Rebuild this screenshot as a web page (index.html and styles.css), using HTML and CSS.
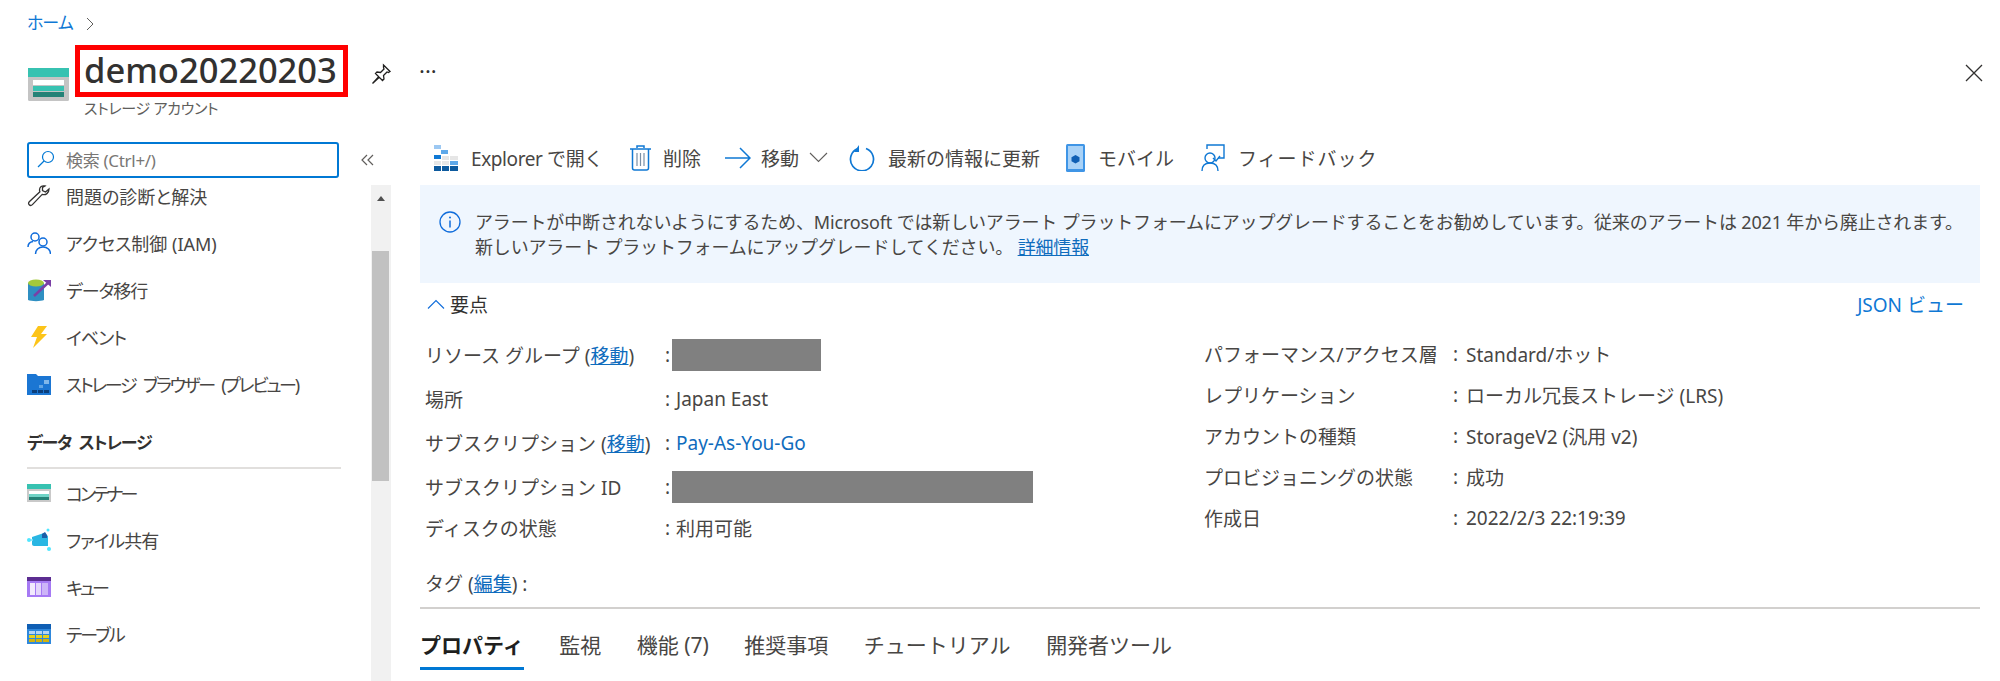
FILE: index.html
```html
<!DOCTYPE html>
<html lang="ja">
<head>
    <meta charset="UTF-8">
    <title>demo20220203 - ストレージ アカウント</title>
    <link rel="stylesheet" href="styles.css">
</head>
<body>

    <nav class="breadcrumb">
        <a href="#">ホーム</a>
        <svg width="10" height="14" viewBox="0 0 10 14"><path d="M2 1l6 6-6 6" fill="none" stroke="#605e5c" stroke-width="1"/></svg>
    </nav>

    <header class="blade-header">
        <svg class="blade-icon" width="41" height="33" viewBox="0 0 41 33">
            <rect x="0" y="0" width="41" height="33" rx="1.5" fill="#c4c4c4"/>
            <rect x="0" y="0" width="41" height="9" fill="#37c2b1"/>
            <rect x="5" y="12" width="31" height="5" fill="#fff"/>
            <rect x="5" y="18" width="31" height="5" fill="#37c2b1"/>
            <rect x="5" y="24" width="31" height="5" fill="#258277"/>
        </svg>
        <div class="blade-title">
            <h1>demo20220203</h1>
            <p>ストレージ アカウント</p>
        </div>
        <svg class="pin" width="22" height="22" viewBox="0 0 22 22"><path d="M13.5 2l6.500 6.500-1.500 1-1.500-.5-3.500 3.500.5 3.500-1.500 1.500-3.200-3.200-6.800 6.200 6.200-6.800-3.200-3.200 1.500-1.500 3.500.5 3.500-3.500-.5-1.500z" fill="none" stroke="#201f1e" stroke-width="1.300"/></svg>
        <span class="more">···</span>
        <svg class="close" width="18" height="18" viewBox="0 0 18 18"><path d="M1 1l16 16M17 1L1 17" stroke="#323130" stroke-width="1.300"/></svg>
    </header>

    <div class="blade-body">
        <aside class="sidebar">
            <div class="sidebar-main">
                <div class="search">
                    <svg width="18" height="18" viewBox="0 0 18 18"><circle cx="11" cy="7" r="5.500" fill="none" stroke="#0078d4" stroke-width="1.200"/><path d="M7 11l-6 6" stroke="#0078d4" stroke-width="1.300"/></svg>
                    <span>検索 (Ctrl+/)</span>
                </div>
                <ul class="menu menu-first">
                    <li>
                        <svg width="24" height="24" viewBox="0 0 24 24"><path d="M22 5l-3.500 3-3-1.500V3.500L18 2c-3-.8-5.500 1-5.500 4 0 .8.200 1.300.400 1.800L2.500 17.500c-1.200 1.200-1.200 2.500-.3 3.300.9.900 2.200.8 3.200-.2l9.800-10.200c3.500 1 6.800-1.300 6.800-5.400z" fill="none" stroke="#323130" stroke-width="1.300"/></svg>
                        問題の診断と解決
                    </li>
                    <li>
                        <svg width="24" height="24" viewBox="0 0 24 24"><g fill="none" stroke="#0f6cdb" stroke-width="1.500"><circle cx="8" cy="6" r="4"/><path d="M1 16c0-3 2-5 5-5.500"/><circle cx="16" cy="11" r="4"/><path d="M8.500 23c0-4 3-7 7.500-7s7.500 3 7.500 7"/></g></svg>
                        アクセス制御 (IAM)
                    </li>
                    <li class="tight-1">
                        <svg width="24" height="24" viewBox="0 0 24 24"><path d="M1 5h16v17c-3 1.500-13 1.500-16 0z" fill="#2f8fc2"/><ellipse cx="9" cy="5" rx="8" ry="3.500" fill="#a4c93a"/><path d="M7 18L22 4" stroke="#7a3fa6" stroke-width="2.500"/><path d="M16 2h8v7z" fill="#7a3fa6"/></svg>
                        データ移行
                    </li>
                    <li class="tight-1">
                        <svg width="24" height="24" viewBox="0 0 24 24"><path d="M11 1h9l-6 8h6L6 23l4-11H4z" fill="#fcc419"/></svg>
                        イベント
                    </li>
                    <li class="tight-words">
                        <svg width="24" height="22" viewBox="0 0 24 22"><path d="M0 1h9l2 2h13v19H0z" fill="#1b76d3"/><rect x="17" y="7" width="5" height="4" fill="#7fb7ea"/><rect x="12" y="12" width="4" height="3" fill="#5fa4e4"/><rect x="5" y="17" width="5" height="3" fill="#0b3f7c"/><rect x="11" y="17" width="5" height="3" fill="#0b3f7c"/><rect x="17" y="17" width="5" height="3" fill="#0b3f7c"/></svg>
                        ストレージ ブラウザー (プレビュー)
                    </li>
                </ul>
                <h2 class="menu-section">データ ストレージ</h2>
                <ul class="menu">
                    <li class="tight-3">
                        <svg width="24" height="18" viewBox="0 0 24 18"><rect width="24" height="18" fill="#c9c9c9"/><rect width="24" height="5" fill="#37c2b1"/><rect x="2" y="7" width="20" height="3" fill="#fff"/><rect x="2" y="10" width="20" height="3" fill="#6fd3c6"/><rect x="2" y="13" width="20" height="3" fill="#258277"/></svg>
                        コンテナー
                    </li>
                    <li class="tight-1">
                        <svg width="24" height="24" viewBox="0 0 24 24"><path d="M5 9l12-4 4 3v10H7c-1 0-2-1-2-2z" fill="#29b6e3"/><path d="M15 6l3-2 2 3v3h-5z" fill="#1a5fa8"/><path d="M1 12l5-1v2z" fill="#6fdcf5"/><circle cx="2" cy="12" r="2" fill="#50e6ff"/><circle cx="22" cy="21" r="2" fill="#50e6ff"/><circle cx="21" cy="2" r="1.500" fill="#50e6ff"/></svg>
                        ファイル共有
                    </li>
                    <li class="tight-3">
                        <svg width="24" height="20" viewBox="0 0 24 20"><rect width="24" height="20" fill="#a67af4"/><rect width="24" height="4" fill="#5c2d91"/><rect x="3" y="6" width="5" height="12" fill="#f2eafd"/><rect x="9" y="6" width="5" height="12" fill="#e4d6fb"/><rect x="15" y="6" width="6" height="12" fill="#cdb5f8"/></svg>
                        キュー
                    </li>
                    <li class="tight-2">
                        <svg width="24" height="20" viewBox="0 0 24 20"><rect width="24" height="20" fill="#2f88dc"/><rect y="0" width="24" height="5" fill="#0f5fb4"/><rect x="2" y="7" width="6" height="3" fill="#b3d4f5"/><rect x="9" y="7" width="6" height="3" fill="#b3d4f5"/><rect x="16" y="7" width="6" height="3" fill="#b3d4f5"/><rect x="2" y="11" width="6" height="3" fill="#e8d21d"/><rect x="9" y="11" width="6" height="3" fill="#e8d21d"/><rect x="16" y="11" width="6" height="3" fill="#e8d21d"/><rect x="2" y="15" width="6" height="3" fill="#d1b40f"/><rect x="9" y="15" width="6" height="3" fill="#d1b40f"/><rect x="16" y="15" width="6" height="3" fill="#d1b40f"/></svg>
                        テーブル
                    </li>
                </ul>
            </div>
            <div class="sidebar-side">
                <svg class="collapse" width="14" height="12" viewBox="0 0 14 12"><path d="M6 1L1 6l5 5M12 1L7 6l5 5" fill="none" stroke="#605e5c" stroke-width="1.200"/></svg>
                <div class="scrollbar">
                    <div class="scroll-arrow"></div>
                    <div class="scroll-thumb"></div>
                </div>
            </div>
        </aside>

        <main class="content">
            <div class="commandbar">
                <div class="command command-latin">
                    <svg width="24" height="26" viewBox="0 0 24 26"><rect x="0" y="0" width="7" height="4" fill="#9cc8f2"/><rect x="7" y="5" width="7" height="4" fill="#5ea9ea"/><rect x="0" y="10" width="7" height="4" fill="#0f78d4"/><rect x="8" y="11" width="7" height="4" fill="#e6e6e6"/><rect x="16" y="11" width="8" height="4" fill="#e6e6e6"/><rect x="0" y="16" width="7" height="4" fill="#e6e6e6"/><rect x="8" y="16" width="7" height="4" fill="#e6e6e6"/><rect x="16" y="16" width="8" height="4" fill="#5ea9ea"/><rect x="0" y="21" width="7" height="5" fill="#0d5a9e"/><rect x="8" y="21" width="7" height="5" fill="#0d5a9e"/><rect x="16" y="21" width="8" height="5" fill="#0d5a9e"/></svg>
                    Explorer で開く
                </div>
                <div class="command command-delete">
                    <svg width="21" height="26" viewBox="0 0 21 26"><g fill="none" stroke="#0f78d4" stroke-width="1.500"><path d="M7 3V1h7v2M0 4h21M2.500 4v19q0 2 2 2h12q2 0 2-2V4"/></g><path d="M7 8v13M10.500 8v13M14 8v13" stroke="#7a8fa6" stroke-width="1.200"/></svg>
                    削除
                </div>
                <div class="command command-move">
                    <svg width="26" height="24" viewBox="0 0 26 24"><path d="M0 12h25M15 2l10 10-10 10" fill="none" stroke="#0f78d4" stroke-width="1.500"/></svg>
                    移動
                    <svg width="19" height="11" viewBox="0 0 19 11"><path d="M1 1l8.500 8.500L18 1" fill="none" stroke="#605e5c" stroke-width="1.100"/></svg>
                </div>
                <div class="command">
                    <svg width="26" height="26" viewBox="0 0 26 26"><path d="M9 3.500a11.500 11.500 0 1 0 8 0" fill="none" stroke="#0f78d4" stroke-width="1.700"/><path d="M10 0v7H5z" fill="#0f78d4"/></svg>
                    最新の情報に更新
                </div>
                <div class="command">
                    <svg width="19" height="28" viewBox="0 0 19 28"><rect x="0" y="0" width="19" height="28" rx="1.500" fill="#3f95e6"/><rect x="2" y="2" width="15" height="23" fill="#a9d2f7"/><path d="M9.500 11l4 2.200v4.100l-4 2.200-4-2.200v-4.100z" fill="#0f5fb4"/></svg>
                    モバイル
                </div>
                <div class="command command-feedback">
                    <svg width="24" height="28" viewBox="0 0 24 28"><g fill="none" stroke="#0f78d4" stroke-width="1.400"><path d="M6 5V1h17v13h-6"/><path d="M12 14l3 3 4-5"/><circle cx="9" cy="14" r="5"/><path d="M1 27c0-5 3-8 8-8s8 3 8 8"/></g></svg>
                    フィードバック
                </div>
            </div>

            <div class="banner">
                <svg width="22" height="22" viewBox="0 0 22 22"><circle cx="11" cy="11" r="10" fill="none" stroke="#0f6cdb" stroke-width="1.300"/><circle cx="11" cy="6.500" r="1" fill="#0f6cdb"/><path d="M11 9.500v7" stroke="#0f6cdb" stroke-width="1.500"/></svg>
                <p>アラートが中断されないようにするため、Microsoft では新しいアラート プラットフォームにアップグレードすることをお勧めしています。従来のアラートは 2021 年から廃止されます。<br>新しいアラート プラットフォームにアップグレードしてください。 <a href="#" class="link">詳細情報</a></p>
            </div>

            <div class="essentials-head">
                <div class="essentials-toggle">
                    <svg width="18" height="10" viewBox="0 0 18 10"><path d="M1 9.500L9 1.500l8 8" fill="none" stroke="#0f6cdb" stroke-width="1.100"/></svg>
                    要点
                </div>
                <a href="#" class="json-link">JSON ビュー</a>
            </div>

            <div class="essentials">
                <div class="props props-left">
                    <div class="prop"><span class="prop-label">リソース グループ (<a href="#" class="link">移動</a>)</span><span class="prop-colon">:</span><span class="redacted redacted-short"></span></div>
                    <div class="prop"><span class="prop-label">場所</span><span class="prop-colon">:</span><span>Japan East</span></div>
                    <div class="prop"><span class="prop-label">サブスクリプション (<a href="#" class="link">移動</a>)</span><span class="prop-colon">:</span><a href="#" class="plain-link">Pay-As-You-Go</a></div>
                    <div class="prop"><span class="prop-label">サブスクリプション ID</span><span class="prop-colon">:</span><span class="redacted redacted-long"></span></div>
                    <div class="prop prop-last"><span class="prop-label">ディスクの状態</span><span class="prop-colon">:</span><span>利用可能</span></div>
                </div>
                <div class="props props-right">
                    <div class="prop"><span class="prop-label">パフォーマンス/アクセス層</span><span class="prop-colon">:</span><span>Standard/ホット</span></div>
                    <div class="prop"><span class="prop-label">レプリケーション</span><span class="prop-colon">:</span><span>ローカル冗長ストレージ (LRS)</span></div>
                    <div class="prop"><span class="prop-label">アカウントの種類</span><span class="prop-colon">:</span><span>StorageV2 (汎用 v2)</span></div>
                    <div class="prop"><span class="prop-label">プロビジョニングの状態</span><span class="prop-colon">:</span><span>成功</span></div>
                    <div class="prop"><span class="prop-label">作成日</span><span class="prop-colon">:</span><span>2022/2/3 22:19:39</span></div>
                </div>
            </div>

            <div class="tags">タグ (<a href="#" class="link">編集</a>) :</div>

            <div class="tabs">
                <div class="tab active">プロパティ</div>
                <div class="tab">監視</div>
                <div class="tab">機能 (7)</div>
                <div class="tab">推奨事項</div>
                <div class="tab">チュートリアル</div>
                <div class="tab">開発者ツール</div>
            </div>
        </main>
    </div>

</body>
</html>
```

FILE: styles.css
```css
* {
    box-sizing: border-box;
}
html, body {
    margin: 0;
    height: 681px;
    overflow: hidden;
}
body {
    font-family: "Noto Sans", "Noto Sans CJK JP", sans-serif;
    font-feature-settings: "palt";
    font-size: 16px;
    color: #323130;
    background: #fff;
}
a {
    text-decoration: none;
    color: #0f6cbd;
}
ul {
    list-style: none;
    margin: 0;
    padding: 0;
}

.breadcrumb {
    height: 45px;
    padding: 12px 0 0 27px;
    display: flex;
    align-items: flex-start;
    gap: 12px;
    font-size: 17px;
    letter-spacing: -1px;
    line-height: 22px;
}
.breadcrumb a {
    color: #0f78d4;
}
.breadcrumb svg {
    margin-top: 5px;
}

.blade-header {
    height: 90px;
    padding-left: 28px;
    display: flex;
    align-items: flex-start;
}
.blade-icon {
    margin-top: 23px;
}
.blade-title {
    margin-left: 6px;
}
.blade-title h1 {
    margin: 0;
    width: 273px;
    height: 52px;
    border: 5px solid #f00;
    padding-left: 4px;
    font-size: 34.500px;
    font-weight: 500;
    line-height: 40px;
    white-space: nowrap;
}
.blade-title p {
    margin: 0 0 0 9px;
    font-size: 15px;
    line-height: 22px;
    letter-spacing: -0.300px;
    color: #605e5c;
}
.pin {
    margin: 18px 0 0 22px;
}
.more {
    margin: 14px 0 0 27px;
    font-size: 22px;
    line-height: 22px;
}
.close {
    margin: 19px 17px 0 auto;
}

.blade-body {
    display: flex;
    height: 546px;
}

.sidebar {
    width: 420px;
    flex: none;
    display: flex;
}
.sidebar-main {
    width: 371px;
    flex: none;
    padding: 7px 0 0 27px;
    overflow: hidden;
}
.search {
    width: 312px;
    height: 36px;
    border: 2px solid #0078d4;
    border-radius: 3px;
    padding: 0 0 2px 8px;
    display: flex;
    align-items: center;
    gap: 11px;
    font-size: 17px;
    letter-spacing: -0.300px;
    color: #797775;
}
.menu-first {
    margin-top: -6px;
}
.menu li {
    height: 47px;
    display: flex;
    align-items: center;
    gap: 15px;
    font-size: 18px;
    color: #484644;
}
.menu li svg {
    flex: none;
}
.menu .tight-1 {
    letter-spacing: -1px;
}
.menu .tight-2 {
    letter-spacing: -2px;
}
.menu .tight-3 {
    letter-spacing: -3px;
}
.menu .tight-words {
    letter-spacing: -2.300px;
    word-spacing: 5px;
}
.menu-section {
    margin: 22px 0 0;
    width: 314px;
    height: 40px;
    border-bottom: 2px solid #e1dfdd;
    font-size: 17px;
    font-weight: 700;
    line-height: 22px;
    letter-spacing: -1.200px;
    word-spacing: 4px;
    padding-top: 3px;
}
.sidebar-side {
    width: 49px;
    display: flex;
    flex-direction: column;
}
.collapse {
    margin: 19px 0 0 -10px;
    height: 12px;
    align-self: flex-start;
}
.scrollbar {
    width: 20px;
    margin-top: 19px;
    flex: 1;
    background: #f1f1f1;
}
.scroll-arrow {
    width: 0;
    height: 0;
    margin: 11px auto 0;
    border: 4px solid transparent;
    border-top: 0;
    border-bottom: 5px solid #505050;
}
.scroll-thumb {
    width: 17px;
    height: 230px;
    margin: 50px 0 0 1px;
    background: #c1c1c1;
}

.content {
    flex: 1;
    min-width: 0;
    padding-right: 20px;
    font-size: 19px;
    font-feature-settings: normal;
}
.commandbar {
    height: 50px;
    padding: 0 0 5px 14px;
    display: flex;
    align-items: center;
    color: #484644;
}
.command {
    display: flex;
    align-items: center;
    gap: 13px;
    margin-right: 26px;
    white-space: nowrap;
}
.command-latin {
    letter-spacing: -0.400px;
    margin-right: 27px;
}
.command-delete {
    gap: 12px;
    margin-right: 24px;
}
.command-move {
    gap: 10px;
    margin-right: 21px;
}
.command-feedback {
    gap: 13px;
    letter-spacing: 1px;
    margin-left: 1px;
}
.banner {
    height: 98px;
    background: #eff6fe;
    padding: 25px 0 0 19px;
    display: flex;
    gap: 14px;
}
.banner svg {
    flex: none;
    margin-top: 1px;
}
.banner p {
    margin: 0;
    font-size: 18px;
    letter-spacing: -0.160px;
    line-height: 25px;
    white-space: nowrap;
    color: #484644;
}
.link {
    text-decoration: underline;
}
.essentials-head {
    height: 50px;
    padding: 0 16px 8px 7px;
    display: flex;
    align-items: center;
    justify-content: space-between;
}
.essentials-toggle {
    display: flex;
    align-items: center;
    gap: 5px;
}
.json-link {
    color: #0f78d4;
}

.essentials {
    height: 224px;
    padding-left: 5px;
    display: flex;
    color: #484644;
}
.props {
    display: flex;
    flex-direction: column;
    flex: none;
}
.props-left {
    width: 779px;
}
.prop {
    height: 44px;
    display: flex;
    align-items: center;
    white-space: nowrap;
}
.prop-last {
    height: 38px;
}
.prop-label {
    width: 240px;
    flex: none;
}
.prop-colon {
    width: 11px;
    flex: none;
}
.props-right .prop {
    height: 41px;
}
.props-right .prop-label {
    width: 249px;
}
.props-right .prop-colon {
    width: 13px;
}
.redacted {
    height: 32px;
    margin-left: -4px;
    background: #808080;
}
.redacted-short {
    width: 149px;
}
.redacted-long {
    width: 361px;
}
.plain-link {
    color: #0f6cbd;
}
.tags {
    height: 52px;
    padding: 16px 0 0 5px;
    line-height: 22px;
    border-bottom: 2px solid #d2d0ce;
    color: #484644;
}
.tabs {
    display: flex;
    gap: 35.500px;
    height: 64px;
}
.tab {
    height: 61px;
    padding-top: 22px;
    font-size: 21px;
    line-height: 28px;
    color: #484644;
    white-space: nowrap;
}
.tab.active {
    font-weight: 700;
    color: #201f1e;
    border-bottom: 3px solid #0078d4;
}
```
